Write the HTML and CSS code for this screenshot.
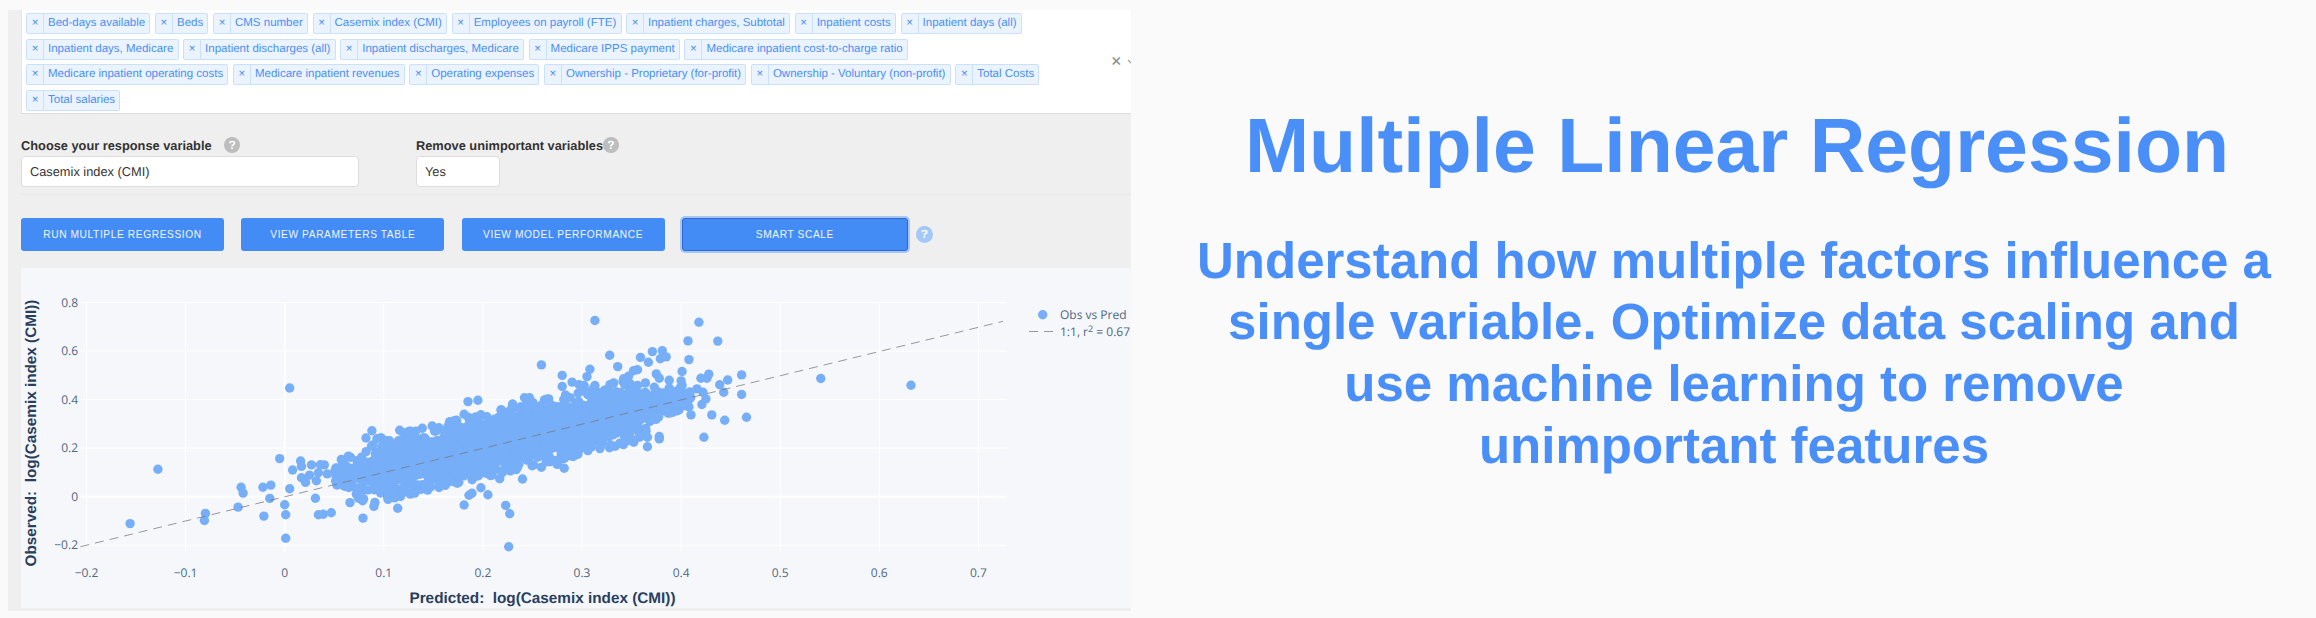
FILE: index.html
```html
<!DOCTYPE html>
<html lang="en">
<head>
    <meta charset="UTF-8">
    <meta name="viewport" content="width=device-width, initial-scale=1.0">
    <title>Multiple Linear Regression</title>
    <link rel="stylesheet" href="styles.css">
</head>
<body>
    <div class="app-panel">
        <div class="multi-select">
            <div class="tag-list">
                <span class="tag"><span class="tag-x">×</span><span class="tag-label">Bed-days available</span></span>
                <span class="tag"><span class="tag-x">×</span><span class="tag-label">Beds</span></span>
                <span class="tag"><span class="tag-x">×</span><span class="tag-label">CMS number</span></span>
                <span class="tag"><span class="tag-x">×</span><span class="tag-label">Casemix index (CMI)</span></span>
                <span class="tag"><span class="tag-x">×</span><span class="tag-label">Employees on payroll (FTE)</span></span>
                <span class="tag"><span class="tag-x">×</span><span class="tag-label">Inpatient charges, Subtotal</span></span>
                <span class="tag"><span class="tag-x">×</span><span class="tag-label">Inpatient costs</span></span>
                <span class="tag"><span class="tag-x">×</span><span class="tag-label">Inpatient days (all)</span></span>
                <span class="tag"><span class="tag-x">×</span><span class="tag-label">Inpatient days, Medicare</span></span>
                <span class="tag"><span class="tag-x">×</span><span class="tag-label">Inpatient discharges (all)</span></span>
                <span class="tag"><span class="tag-x">×</span><span class="tag-label">Inpatient discharges, Medicare</span></span>
                <span class="tag"><span class="tag-x">×</span><span class="tag-label">Medicare IPPS payment</span></span>
                <span class="tag"><span class="tag-x">×</span><span class="tag-label">Medicare inpatient cost-to-charge ratio</span></span>
                <span class="tag"><span class="tag-x">×</span><span class="tag-label">Medicare inpatient operating costs</span></span>
                <span class="tag"><span class="tag-x">×</span><span class="tag-label">Medicare inpatient revenues</span></span>
                <span class="tag"><span class="tag-x">×</span><span class="tag-label">Operating expenses</span></span>
                <span class="tag"><span class="tag-x">×</span><span class="tag-label">Ownership - Proprietary (for-profit)</span></span>
                <span class="tag"><span class="tag-x">×</span><span class="tag-label">Ownership - Voluntary (non-profit)</span></span>
                <span class="tag"><span class="tag-x">×</span><span class="tag-label">Total Costs</span></span>
                <span class="tag"><span class="tag-x">×</span><span class="tag-label">Total salaries</span></span>
            </div>
            <span class="select-clear">×</span>
            <svg class="select-arrow" width="8" height="6" viewBox="0 0 8 6"><path d="M1 1l3 3 3-3" fill="none" stroke="#999" stroke-width="1.2"/></svg>
        </div>

        <div class="form-row">
            <div class="field field-wide">
                <label class="field-label">Choose your response variable <span class="help help-gap">?</span></label>
                <div class="field-box">Casemix index (CMI)</div>
            </div>
            <div class="field field-narrow">
                <label class="field-label">Remove unimportant variables<span class="help">?</span></label>
                <div class="field-box">Yes</div>
            </div>
        </div>

        <div class="button-row">
            <button class="btn">RUN MULTIPLE REGRESSION</button>
            <button class="btn">VIEW PARAMETERS TABLE</button>
            <button class="btn">VIEW MODEL PERFORMANCE</button>
            <button class="btn btn-focus">SMART SCALE</button>
            <span class="help help-blue">?</span>
        </div>

        <div class="chart">
            <svg id="plot" class="plot" viewBox="21 269 1110 340" width="1110" height="340">
                <g id="grid"></g>
                <g id="points"></g>
                <line class="fit-line" x1="80.4" y1="547.7" x2="1003" y2="322.3"></line>
                <text class="axis-title" x="542.5" y="604" text-anchor="middle">Predicted:  log(Casemix index (CMI))</text>
                <text class="axis-title" x="0" y="0" text-anchor="middle" transform="translate(36 434) rotate(-90)">Observed:  log(Casemix index (CMI))</text>
                <circle class="point" cx="1042.7" cy="315.7" r="4.7"></circle>
                <text class="legend-text" x="1060" y="320">Obs vs Pred</text>
                <line class="fit-line" x1="1029" y1="332.5" x2="1053" y2="332.5"></line>
                <text class="legend-text" x="1060" y="337">1:1, r<tspan class="legend-sup" dy="-4">2</tspan><tspan dy="4"> = 0.67</tspan></text>
            </svg>
        </div>
    </div>

    <div class="intro">
        <h1 class="intro-title">Multiple Linear Regression</h1>
        <p class="intro-text">Understand how multiple factors influence a<br>single variable. Optimize data scaling and<br>use machine learning to remove<br>unimportant features</p>
    </div>

    <script src="chart.js"></script>
</body>
</html>
```

FILE: styles.css
```css
* {
    box-sizing: border-box;
}

body {
    margin: 0;
    height: 618px;
    display: flex;
    align-items: flex-start;
    overflow: hidden;
    background-color: #fafafa;
    font-family: "Liberation Sans", Arial, sans-serif;
    text-rendering: geometricPrecision;
}

.app-panel {
    width: 1123px;
    height: 601px;
    margin: 10px 0 0 8px;
    padding-left: 13px;
    background-color: #efefef;
    overflow: hidden;
}

.multi-select {
    display: flex;
    align-items: center;
    height: 104px;
    background-color: #fff;
    border-bottom: 1px solid #ddd;
    border-left: 1px solid #e6e6e6;
}

.tag-list {
    display: flex;
    flex-wrap: wrap;
    align-content: flex-start;
    gap: 4.6px 4.5px;
    flex: none;
    width: 1075px;
    height: 100%;
    padding: 3px 0 0 4px;
}

.tag {
    display: flex;
    align-items: stretch;
    height: 21px;
    font-size: 11.5px;
    line-height: 19px;
    color: #4a90f5;
    background-color: #ebf3fe;
    border: 1px solid #c9e1fd;
    border-radius: 2px;
}

.tag-x {
    width: 17px;
    text-align: center;
    border-right: 1px solid #c9e1fd;
}

.tag-label {
    padding: 0 4.3px 0 4px;
    white-space: nowrap;
}

.select-clear {
    flex: none;
    margin-left: 14px;
    font-size: 18px;
    color: #888;
}

.select-arrow {
    flex: none;
    margin-left: 5px;
}

.form-row {
    display: flex;
    gap: 57px;
    height: 81px;
    padding-top: 23px;
    border-bottom: 1px solid #e8e8e8;
}

.field-wide {
    width: 338px;
}

.field-narrow {
    width: 84px;
}

.field-label {
    display: flex;
    align-items: center;
    height: 16px;
    margin-bottom: 3px;
    font-size: 12.8px;
    font-weight: bold;
    color: #333;
    white-space: pre;
}

.field-box {
    height: 31px;
    padding: 0 8px;
    font-size: 12.8px;
    line-height: 29px;
    color: #333;
    background-color: #fff;
    border: 1px solid #ddd;
    border-radius: 4px;
}

.help {
    flex: none;
    width: 16px;
    height: 16px;
    border-radius: 50%;
    font-size: 12px;
    font-weight: bold;
    line-height: 16px;
    text-align: center;
    color: #fff;
    background-color: #bdbdbd;
}

.help-gap {
    margin-left: 9px;
}

.help-blue {
    width: 17px;
    height: 17px;
    line-height: 17px;
    background-color: #a3c8f7;
}

.button-row {
    display: flex;
    align-items: center;
    height: 33px;
    margin-top: 23px;
}

.btn {
    width: 203px;
    height: 33px;
    margin-right: 17.3px;
    padding: 0;
    font-family: inherit;
    font-size: 10.2px;
    letter-spacing: 0.6px;
    color: #f1f6ff;
    background-color: #438bf5;
    border: none;
    border-radius: 3px;
}

.btn-focus {
    width: 226px;
    margin-right: 8px;
    border: 1px solid #2f68cf;
    box-shadow: 0 0 0 2px #a7c6f6;
}

.chart {
    height: 340px;
    margin-top: 17px;
    background-color: #f5f7fa;
}

.plot {
    display: block;
}

.grid-line {
    stroke: #fff;
    stroke-width: 1;
}

.grid-zero {
    stroke-width: 2;
}

.tick-label {
    font-family: "Open Sans", sans-serif;
    font-size: 12px;
    fill: #506784;
}

.axis-title {
    font-size: 15.3px;
    font-weight: bold;
    fill: #2a3f5f;
    white-space: pre;
}

.point {
    fill: #76aef8;
}

.fit-line {
    stroke: #777;
    stroke-opacity: 0.75;
    stroke-width: 1;
    stroke-dasharray: 9 6;
}

.legend-text {
    font-family: "Open Sans", sans-serif;
    font-size: 12px;
    fill: #506784;
}

.legend-sup {
    font-size: 9px;
}

.intro {
    flex: 1;
    padding: 0 0 0 27px;
    text-align: center;
    color: #4a8ff7;
}

.intro-title {
    margin: 102px 0 0;
    font-size: 77px;
    line-height: 89px;
    font-weight: bold;
}

.intro-text {
    margin: 38.5px -17px 0 -23px;
    font-size: 51px;
    line-height: 61.7px;
    font-weight: bold;
}
```

FILE: chart.js
```js
const NS = 'http://www.w3.org/2000/svg';
const plotLeft = 80.4, plotRight = 1006.7, plotTop = 303, plotBottom = 553;

function xPos(v) { return 284.7 + 991 * v; }
function yPos(v) { return 497.7 - 242.7 * v; }

function addEl(parent, tag, attrs, text) {
    const el = document.createElementNS(NS, tag);
    Object.keys(attrs).forEach(k => el.setAttribute(k, attrs[k]));
    if (text) el.textContent = text;
    parent.appendChild(el);
    return el;
}

function tickText(v) {
    const s = Math.abs(v) < 1e-9 ? '0' : String(Math.abs(v));
    return v < -1e-9 ? '\u2212' + s : s;
}

const grid = document.getElementById('grid');
[-0.2, -0.1, 0, 0.1, 0.2, 0.3, 0.4, 0.5, 0.6, 0.7].forEach(v => {
    const x = xPos(v);
    addEl(grid, 'line', { class: v === 0 ? 'grid-line grid-zero' : 'grid-line', x1: x, x2: x, y1: plotTop, y2: plotBottom });
    addEl(grid, 'text', { class: 'tick-label', x: x, y: 578, 'text-anchor': 'middle' }, tickText(v));
});
[-0.2, 0, 0.2, 0.4, 0.6, 0.8].forEach(v => {
    const y = yPos(v);
    addEl(grid, 'line', { class: v === 0 ? 'grid-line grid-zero' : 'grid-line', x1: plotLeft, x2: plotRight, y1: y, y2: y });
    addEl(grid, 'text', { class: 'tick-label', x: 78, y: y + 4, 'text-anchor': 'end' }, tickText(v));
});

// outliers read off the original plot
const outliers = [
    [-0.156,-0.111],[-0.128,0.113],[-0.08,-0.069],[-0.081,-0.098],[-0.047,-0.043],[-0.044,0.039],[-0.042,0.015],
    [-0.022,0.039],[-0.014,0.048],[-0.015,-0.007],[-0.021,-0.08],[-0.005,0.157],[0.005,0.448],[0.005,0.033],
    [0,-0.033],[0.001,-0.074],[0.001,-0.171],[0.008,0.11],[0.016,0.147],[0.017,0.125],[0.027,0.131],[0.036,0.132],
    [0.04,0.131],[0.034,0.099],[0.025,0.089],[0.017,0.078],[0.021,0.059],[0.043,0.094],[0.032,0.066],[0.031,-0.006],
    [0.034,-0.074],[0.039,-0.072],[0.047,-0.066],[0.079,-0.088],[0.09,-0.04],[0.114,-0.048],[0.181,-0.034],
    [0.223,-0.036],[0.227,-0.07],[0.226,-0.206],[0.205,0.008],[0.186,0.006],[0.189,0.014],[0.198,0.037],
    [0.088,0.272],[0.116,0.274],[0.082,0.242],[0.185,0.392],[0.195,0.397],[0.181,0.34],[0.23,0.382],[0.242,0.408],
    [0.247,0.408],[0.259,0.543],[0.28,0.5],[0.28,0.454],[0.29,0.472],[0.297,0.462],[0.302,0.457],[0.305,0.495],
    [0.308,0.525],[0.313,0.726],[0.275,0.133],[0.282,0.117],[0.259,0.121],[0.24,0.073],[0.217,0.074],[0.418,0.719],
    [0.407,0.642],[0.437,0.641],[0.371,0.598],[0.381,0.602],[0.328,0.583],[0.359,0.574],[0.385,0.576],[0.408,0.565],
    [0.336,0.536],[0.401,0.516],[0.352,0.519],[0.356,0.523],[0.375,0.506],[0.378,0.488],[0.388,0.48],[0.428,0.505],
    [0.42,0.488],[0.426,0.488],[0.447,0.481],[0.461,0.502],[0.541,0.487],[0.632,0.459],[0.439,0.461],[0.443,0.43],
    [0.461,0.421],[0.4,0.477],[0.401,0.458],[0.416,0.444],[0.422,0.43],[0.425,0.403],[0.421,0.38],[0.41,0.337],
    [0.431,0.337],[0.444,0.315],[0.466,0.327],[0.423,0.245],[0.378,0.238],[0.378,0.248],[0.366,0.206],[0.366,0.245],
    [0.358,0.245],[0.351,0.234],[0.338,0.22],[0.329,0.213],[0.306,0.19],[0.298,0.197],[0.332,0.469],[0.342,0.486],
    [0.347,0.497],[0.356,0.458],[0.364,0.469],[0.373,0.451],[0.313,0.458],[0.325,0.44],[0.302,0.458],[0.367,0.554],[0.379,0.568]
];

// seeded so the cloud comes out the same on every load
let seed = 20240611;
function rnd() {
    seed = (seed + 0x6D2B79F5) | 0;
    let t = Math.imul(seed ^ (seed >>> 15), 1 | seed);
    t = (t + Math.imul(t ^ (t >>> 7), 61 | t)) ^ t;
    return ((t ^ (t >>> 14)) >>> 0) / 4294967296;
}
function gauss() {
    return (rnd() + rnd() + rnd() + rnd() - 2) * 1.73;
}

const cloud = [];
for (let i = 0; i < 2400; i++) {
    const x = 0.05 + 0.36 * (i % 3 === 0 ? rnd() : (rnd() + rnd()) / 2);
    const spread = i % 6 === 0 ? 0.08 : 0.055;
    const taper = Math.min(1, (x - 0.02) / 0.08, (0.43 - x) / 0.1);
    let off = gauss() * spread * taper;
    off = Math.max(-0.13, Math.min(0.13, off));
    cloud.push([x, 0.95 * x + 0.02 + off]);
}

const points = document.getElementById('points');
cloud.concat(outliers).forEach(p => {
    addEl(points, 'circle', { class: 'point', cx: xPos(p[0]).toFixed(1), cy: yPos(p[1]).toFixed(1), r: 4.7 });
});
```
